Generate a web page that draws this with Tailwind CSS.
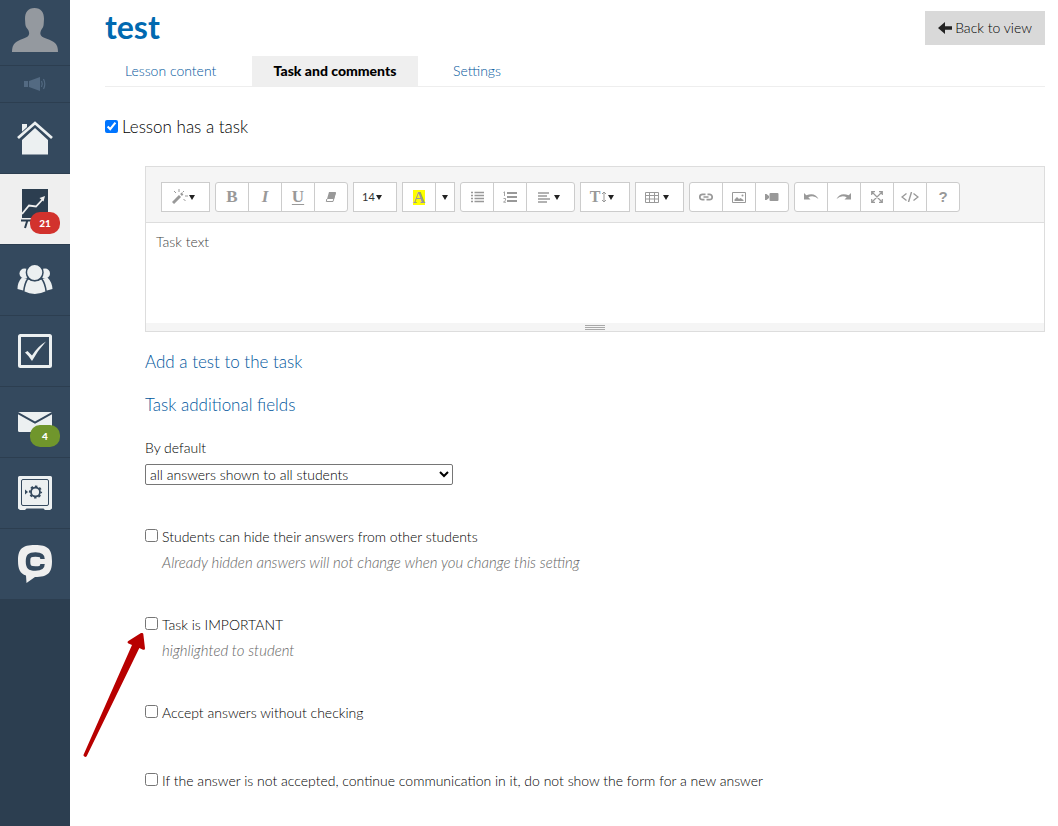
<!DOCTYPE html>
<html lang="en">
<head>
    <meta charset="UTF-8">
    <meta name="viewport" content="width=device-width, initial-scale=1.0">
    <title>test</title>
    <script src="https://cdn.jsdelivr.net/npm/@tailwindcss/browser@4"></script>
</head>
<body class="flex min-h-screen bg-white font-['Lato',sans-serif] text-sm font-light leading-5 text-black">

    <!-- Sidebar -->
    <nav class="w-[70px] shrink-0 bg-[#2c3e50]" aria-label="Main menu">
        <a href="#" aria-label="Profile" class="flex h-[66px] justify-center border-b border-[#2c3e50] bg-[#34495e] pt-[7px]">
            <svg class="h-[46px] w-[46px]" viewBox="0 0 46 46" fill="#94999f">
                <path d="M13 12C13 5 16 1 22.500 1S32 5 32 12l-.3 5c0 3-1.700 4.500-2.700 6.500-.8 2-1 3.500 0 5 2.500 3.500 10 3.500 14 7.500 2.200 2.200 3 5 3 9H0c0-4 .8-6.800 3-9 4-4 11-4 13.500-7.500 1-1.500.8-3 0-5-1-2-3.200-3.500-3.200-6.500z"/>
            </svg>
        </a>
        <a href="#" aria-label="News" class="flex h-[37px] items-center justify-center border-b border-[#2c3e50] bg-[#34495e]">
            <svg class="h-4 w-6" viewBox="0 0 24 16" fill="#536a82">
                <path d="M1 5h4v6H1zM6 5l11-4v14L6 11z"/>
                <path d="M18.500 5q1.500 3 0 6M20.500 3q2.600 5 0 10" fill="none" stroke="#536a82" stroke-width="1.200"/>
            </svg>
        </a>
        <a href="#" aria-label="Home" class="flex h-[71px] items-center justify-center border-b border-[#2c3e50] bg-[#34495e]">
            <svg class="h-[36px] w-[36px]" viewBox="0 0 36 36" fill="#ecf0f1">
                <path d="M5 4h5v5l-5 5zM5 20 18 8l13 12v14.500H5z"/>
                <path d="M1 19 18 3.500 35 19" fill="none" stroke="#34495e" stroke-width="5.500"/>
                <path d="M1 18 18 3 35 18" fill="none" stroke="#ecf0f1" stroke-width="2.800"/>
            </svg>
        </a>
        <a href="#" aria-label="Trainings" class="relative flex h-[71px] justify-center border-b border-[#2c3e50] bg-[#efefef] pt-[15px]">
            <svg class="h-[42px] w-[28px]" viewBox="0 0 28 42">
                <path d="M1 0h26v29H1z" fill="#2c3e50"/>
                <path d="M1 25 8 16.500 15 17.500 22 10" fill="none" stroke="#efefef" stroke-width="1.800"/>
                <path d="m24 7-1.500 5.500-4-3.500z" fill="#efefef"/>
                <path d="M0 31.500h28M6.500 31 4 39M21.500 31l2.500 8" stroke="#2c3e50" stroke-width="2"/>
            </svg>
            <span class="absolute top-[38px] left-[30px] flex h-[22px] w-[30px] items-center justify-center rounded-[10px] bg-[#d2322d] text-[10px] font-black text-white">21</span>
        </a>
        <a href="#" aria-label="Users" class="flex h-[71px] items-center justify-center border-b border-[#2c3e50] bg-[#34495e]">
            <svg class="h-[32px] w-[36px]" viewBox="0 0 36 32" fill="#ecf0f1">
                <circle cx="7.500" cy="9.500" r="5"/>
                <circle cx="28" cy="9.500" r="5"/>
                <path d="M5 13.500Q.5 18 .5 25L8 27 11 15zM30.500 13.500Q35 18 35.500 25L28 27 25 15z"/>
                <g stroke="#34495e" stroke-width="1.500">
                    <path d="M11 14.500Q7.500 19 6.700 28q11 5.500 22.500 0Q28.200 19 24.500 14.500q-6.500 4-13.500 0z"/>
                    <circle cx="17.700" cy="8.500" r="8.300"/>
                </g>
            </svg>
        </a>
        <a href="#" aria-label="Tasks" class="flex h-[71px] items-center justify-center border-b border-[#2c3e50] bg-[#34495e]">
            <svg class="h-[34px] w-[34px]" viewBox="0 0 34 34">
                <rect x="1.500" y="1.500" width="31" height="31" rx="1" fill="none" stroke="#ecf0f1" stroke-width="3"/>
                <path d="M7 18.500 9.500 17l4.500 4.500Q20 12 28 7.500 20 16 14 27 11 22 7 18.500z" fill="#ecf0f1"/>
            </svg>
        </a>
        <a href="#" aria-label="Messages" class="relative flex h-[71px] items-center justify-center border-b border-[#2c3e50] bg-[#34495e]">
            <svg class="h-[20px] w-[34px]" viewBox="0 0 34 20">
                <rect width="34" height="20" rx="1.500" fill="#ecf0f1"/>
                <path d="m0 1 17 9.500L34 1" fill="none" stroke="#34495e" stroke-width="2"/>
            </svg>
            <span class="absolute top-[38px] left-[30px] flex h-[22px] w-[30px] items-center justify-center rounded-[10px] bg-[#70962c] text-[10px] font-black text-white">4</span>
        </a>
        <a href="#" aria-label="Sales" class="flex h-[71px] items-center justify-center border-b border-[#2c3e50] bg-[#34495e]">
            <svg class="h-[34px] w-[34px]" viewBox="0 0 34 34">
                <path d="M1.500 0h31A1.500 1.500 0 0 1 34 1.500v31L32 34h-5l-1.500-1.500h-17L7 34H2L0 32.500v-31A1.500 1.500 0 0 1 1.500 0z" fill="#ecf0f1"/>
                <rect x="3.500" y="3.500" width="27" height="26" rx="1.500" fill="none" stroke="#34495e"/>
                <path d="m7 13.500 3 2.500-3 2.500z" fill="#34495e"/>
                <circle cx="17.500" cy="16" r="4.500" fill="none" stroke="#34495e" stroke-width="1.800"/>
                <circle cx="17.500" cy="16" r="5.700" fill="none" stroke="#34495e" stroke-width="1.800" stroke-dasharray="2.400 2.077" stroke-dashoffset="1.200"/>
            </svg>
        </a>
        <a href="#" aria-label="Chatium" class="flex h-[70px] justify-center bg-[#34495e] pt-4">
            <svg class="h-[38px] w-[34px]" viewBox="0 0 34 38">
                <path d="M17 0c13 0 17 4 17 16s-4 16-17 16L8.500 38 8 30.500C2 28.500 0 24 0 16 0 4 4 0 17 0z" fill="#efefef"/>
                <path d="M24.500 14c0-3.500-2-4.500-7-4.500-6 0-7.500 1.500-7.500 7s1.500 7 7.500 7c5 0 7-1 7-4.500" fill="none" stroke="#34495e" stroke-width="4.500"/>
            </svg>
        </a>
    </nav>

    <main class="min-w-0 flex-1 pr-[13px] pl-[35px]">
        <header class="flex h-14 items-start justify-between">
            <h1 class="pt-[7px] text-[32px] leading-10 font-bold text-[#0069b0]">test</h1>
            <button type="button" class="mt-[11px] flex h-[34px] w-[120px] items-center justify-center gap-[3px] bg-[#d9d9d9] pb-px">
                <svg class="h-3 w-[14px]" viewBox="0 0 14 12" fill="#222"><path d="M0 6 7 0v4.200h7v3.600H7V12z"/></svg>
                Back to view
            </button>
        </header>

        <!-- Tabs -->
        <nav class="flex gap-[15px] border-b border-[#eee] text-[#00569c]">
            <a href="#" class="flex h-[30px] w-[132px] items-center px-5 pb-px">Lesson content</a>
            <a href="#" class="flex h-[30px] w-[166px] items-center justify-center bg-[#efefef] pb-px font-black text-black" aria-current="page">Task and comments</a>
            <a href="#" class="flex h-[30px] items-center px-5 pb-px">Settings</a>
        </nav>

        <label class="mt-[30px] flex items-start gap-1 text-[17px]">
            <input type="checkbox" checked class="mt-[3px] h-[13px] w-[13px]">
            Lesson has a task
        </label>

        <div class="mt-[29px] pl-10">
            <!-- Editor -->
            <div class="border border-[#ddd]">
                <div class="flex flex-wrap gap-[5px] border-b border-[#ddd] bg-[#f5f5f5] py-[10px] pt-[15px] pl-[15px] text-[#999] [&_button]:-ml-px [&_button]:flex [&_button]:h-[30px] [&_button]:w-[34px] [&_button]:items-center [&_button]:justify-center [&_button]:border [&_button]:border-[#ccc] [&_button]:bg-white [&>div]:flex [&>div]:pl-px">
                    <div>
                        <button type="button" aria-label="Style" class="min-w-[49px] gap-px pr-1">
                            <svg class="h-4 w-4" viewBox="0 0 16 16" stroke="#999" fill="none"><path d="m1 14 7-7" stroke-width="3"/><path d="m9 6 1.500-1.500" stroke-width="2.500"/><path d="M7 0v3M2 2l2 2M12 2l-1.500 1.500M13 7h3M11.500 10l2 2"/></svg>
                            <svg class="h-[5px] w-[6px]" viewBox="0 0 6 5" fill="#222"><path d="M0 0h6L3 5z"/></svg>
                        </button>
                    </div>
                    <div class="font-['Liberation_Serif',serif] text-[17px] font-bold">
                        <button type="button" class="rounded-l-[3px]">B</button>
                        <button type="button" class="italic">I</button>
                        <button type="button" class="underline underline-offset-2">U</button>
                        <button type="button" aria-label="Remove formatting" class="rounded-r-[3px]">
                            <svg class="h-3 w-3" viewBox="0 0 12 12" fill="#999"><path d="M4 1h7L9 8H2z"/><path d="M1.800 8 1.300 10.500h6.700L10.500 2" fill="none" stroke="#999"/></svg>
                        </button>
                    </div>
                    <div>
                        <button type="button" aria-label="Font size" class="min-w-[44px] gap-px pr-[6px] text-[11px] font-normal text-[#333]">14
                            <svg class="h-[5px] w-[6px]" viewBox="0 0 6 5" fill="#222"><path d="M0 0h6L3 5z"/></svg>
                        </button>
                    </div>
                    <div>
                        <button type="button" aria-label="Text color" class="font-['Liberation_Serif',serif] text-[17px] font-bold"><span class="h-[15px] w-3 bg-[#ff0] text-center leading-4">A</span></button>
                        <button type="button" aria-label="More colors" class="max-w-5">
                            <svg class="h-[5px] w-[6px]" viewBox="0 0 6 5" fill="#222"><path d="M0 0h6L3 5z"/></svg>
                        </button>
                    </div>
                    <div>
                        <button type="button" aria-label="Bulleted list" class="rounded-l-[3px]">
                            <svg class="h-3 w-[13px]" viewBox="0 0 13 12" stroke="#999" stroke-width="1.500"><path d="M0 1.500h2m1.500 0H13M0 4.500h2m1.500 0H13M0 7.500h2m1.500 0H13M0 10.500h2m1.500 0H13"/></svg>
                        </button>
                        <button type="button" aria-label="Numbered list">
                            <svg class="h-3 w-[14px]" viewBox="0 0 14 12" fill="none" stroke="#999"><path d="M4 2h10M4 6h10M4 10h10" stroke-width="2"/><path d="m.5 1.500 1-.7V5M.5 7.500h2v1.700l-2 2h2.500" stroke-width=".9"/></svg>
                        </button>
                        <button type="button" aria-label="Paragraph" class="min-w-[49px] gap-1 rounded-r-[3px] pr-1">
                            <svg class="h-3 w-3" viewBox="0 0 12 12" stroke="#999" stroke-width="1.600"><path d="M0 2h11M0 5h9M0 8h12M0 11h9"/></svg>
                            <svg class="h-[5px] w-[6px]" viewBox="0 0 6 5" fill="#222"><path d="M0 0h6L3 5z"/></svg>
                        </button>
                    </div>
                    <div>
                        <button type="button" aria-label="Line height" class="min-w-[50px] gap-px pr-[6px] font-['Liberation_Serif',serif] text-[16px] font-bold">T
                            <svg class="h-3 w-[6px]" viewBox="0 0 6 12" fill="none" stroke="#999"><path d="M3 1v10M1 3l2-2 2 2M1 9l2 2 2-2"/></svg>
                            <svg class="h-[5px] w-[6px]" viewBox="0 0 6 5" fill="#222"><path d="M0 0h6L3 5z"/></svg>
                        </button>
                    </div>
                    <div>
                        <button type="button" aria-label="Table" class="min-w-[49px] gap-1 pr-[6px]">
                            <svg class="h-[11px] w-[14px]" viewBox="0 0 14 11" fill="none" stroke="#999"><path d="M.5.5h13v10H.5zM.5 3.500h13M.5 7h13M4.500 .5v10M9.500 .5v10"/></svg>
                            <svg class="h-[5px] w-[6px]" viewBox="0 0 6 5" fill="#222"><path d="M0 0h6L3 5z"/></svg>
                        </button>
                    </div>
                    <div>
                        <button type="button" aria-label="Link" class="rounded-l-[3px]">
                            <svg class="h-2 w-[14px]" viewBox="0 0 14 8" fill="none" stroke="#999" stroke-width="1.700"><path d="M6.500 1.300H3.500a2.700 2.700 0 0 0 0 5.400H5.500M7.500 6.700h3a2.700 2.700 0 0 0 0-5.400H8.500M4.500 4h5"/></svg>
                        </button>
                        <button type="button" aria-label="Picture">
                            <svg class="h-[11px] w-[14px]" viewBox="0 0 14 11" fill="#999"><path d="M.5.5h13v10H.5z" fill="none" stroke="#999"/><path d="M2.500 9V7.500L5 5l2 2 1.500-1L11.500 8v1z"/><circle cx="10.500" cy="3.500" r="1"/></svg>
                        </button>
                        <button type="button" aria-label="Video" class="rounded-r-[3px]">
                            <svg class="h-2 w-[14px]" viewBox="0 0 14 8" fill="#999"><path d="M0 1 1.500 1 4 3V5L1.500 7H0z"/><rect x="4.500" width="9" height="8" rx="1"/></svg>
                        </button>
                    </div>
                    <div>
                        <button type="button" aria-label="Undo" class="rounded-l-[3px]">
                            <svg class="h-2 w-4" viewBox="0 0 16 8" fill="#999"><path d="M1 0v6.500h6.500L5.300 4.300Q10.500 1.500 15.500 6 12-1 3.300 2.200z"/></svg>
                        </button>
                        <button type="button" aria-label="Redo">
                            <svg class="h-2 w-4" viewBox="0 0 16 8" fill="#999"><path d="M15 0v6.500H8.500l2.200-2.200Q5.500 1.500.5 6 4-1 12.700 2.200z"/></svg>
                        </button>
                        <button type="button" aria-label="Full screen">
                            <svg class="h-3 w-3" viewBox="0 0 12 12" fill="none" stroke="#999" stroke-width="1.200"><path d="m1 1 10 10M11 1 1 11M.7 4V.7H4M8 .7h3.300V4M11.300 8v3.300H8M4 11.300H.7V8"/></svg>
                        </button>
                        <button type="button" aria-label="Code view">
                            <svg class="h-[10px] w-[18px]" viewBox="0 0 18 10" fill="none" stroke="#999" stroke-width="1.400"><path d="M5.500 1.500 1 5l4.500 3.500M12.500 1.500 17 5l-4.500 3.500M10.500 0l-3 10"/></svg>
                        </button>
                        <button type="button" aria-label="Help" class="rounded-r-[3px] font-['Liberation_Sans',sans-serif] text-[15px] font-bold">?</button>
                    </div>
                </div>
                <textarea aria-label="Task text" class="block h-[100px] w-full resize-none px-[10px] py-[9px] font-light text-[#444] outline-none">Task text</textarea>
                <div class="flex h-2 flex-col items-center justify-center gap-px bg-[#f5f5f5]">
                    <span class="h-px w-5 bg-[#a9a9a9]"></span>
                    <span class="h-px w-5 bg-[#a9a9a9]"></span>
                    <span class="h-px w-5 bg-[#a9a9a9]"></span>
                </div>
            </div>

            <div class="mt-5 flex flex-col items-start gap-[23px] text-[17px] text-[#00569c]">
                <a href="#">Add a test to the task</a>
                <a href="#">Task additional fields</a>
            </div>

            <label for="visibility" class="mt-[23px] block">By default</label>
            <select id="visibility" class="mt-[6px] block h-[21px] w-[308px] rounded-[2px] border border-[#767676] bg-white">
                <option>all answers shown to all students</option>
            </select>

            <!-- Answer settings -->
            <div class="mt-[42px]">
                <label class="flex items-start gap-1">
                    <input type="checkbox" class="mt-[2px] h-[13px] w-[13px]">
                    Students can hide their answers from other students
                </label>
                <p class="mt-[5px] pl-[17px] text-[15px] text-[#666] italic">Already hidden answers will not change when you change this setting</p>
            </div>
            <div class="relative mt-[43px]">
                <label class="flex items-start gap-1">
                    <input type="checkbox" class="mt-[2px] h-[13px] w-[13px]">
                    Task is IMPORTANT
                </label>
                <p class="mt-[5px] pl-[17px] text-[15px] text-[#666] italic">highlighted to student</p>
                <!-- pointer to the checkbox -->
                <svg class="absolute top-[18px] -left-[62px] h-[126px] w-[62px]" viewBox="0 0 186 378" fill="#b80000">
                    <path d="M174 0h3q4 0 4 4l5 42q0 6-6 4l-11-5L11 370q-5 5-10-3L147 36l-12-5q-4-4 1-7z"/>
                </svg>
            </div>
            <label class="mt-[43px] flex items-start gap-1">
                <input type="checkbox" class="mt-[2px] h-[13px] w-[13px]">
                Accept answers without checking
            </label>
            <label class="mt-12 flex items-start gap-1">
                <input type="checkbox" class="mt-[2px] h-[13px] w-[13px]">
                If the answer is not accepted, continue communication in it, do not show the form for a new answer
            </label>
        </div>
    </main>
</body>
</html>
